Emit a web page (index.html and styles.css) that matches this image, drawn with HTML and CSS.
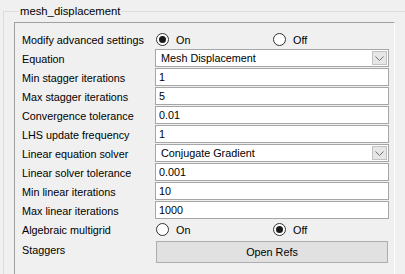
FILE: index.html
```html
<!DOCTYPE html>
<html>
<head>
<meta charset="utf-8">
<link rel="stylesheet" href="styles.css">
</head>
<body>
<fieldset class="group">
  <legend class="group-title">mesh_displacement</legend>
  <div class="panel">
    <div class="form">
      <div class="label">Modify advanced settings</div>
      <div class="radios">
        <label class="radio"><span class="dot on"></span>On</label>
        <label class="radio"><span class="dot"></span>Off</label>
      </div>

      <div class="label">Equation</div>
      <div class="combo"><span class="combo-text">Mesh Displacement</span><span class="combo-btn"><svg width="9" height="5" viewBox="0 0 9 5"><path d="M0.5 0.5 L4.5 4.5 L8.5 0.5" fill="none" stroke="#707070" stroke-width="1"/></svg></span></div>

      <div class="label">Min stagger iterations</div>
      <div class="textbox">1</div>

      <div class="label">Max stagger iterations</div>
      <div class="textbox">5</div>

      <div class="label">Convergence tolerance</div>
      <div class="textbox">0.01</div>

      <div class="label">LHS update frequency</div>
      <div class="textbox">1</div>

      <div class="label">Linear equation solver</div>
      <div class="combo"><span class="combo-text">Conjugate Gradient</span><span class="combo-btn"><svg width="9" height="5" viewBox="0 0 9 5"><path d="M0.5 0.5 L4.5 4.5 L8.5 0.5" fill="none" stroke="#707070" stroke-width="1"/></svg></span></div>

      <div class="label">Linear solver tolerance</div>
      <div class="textbox">0.001</div>

      <div class="label">Min linear iterations</div>
      <div class="textbox">10</div>

      <div class="label">Max linear iterations</div>
      <div class="textbox">1000</div>

      <div class="label">Algebraic multigrid</div>
      <div class="radios">
        <label class="radio"><span class="dot"></span>On</label>
        <label class="radio"><span class="dot on"></span>Off</label>
      </div>

      <div class="label label-btn">Staggers</div>
      <div class="button">Open Refs</div>
    </div>
  </div>
</fieldset>
</body>
</html>
```

FILE: styles.css
```css
html, body {
  margin: 0;
  padding: 0;
  background: #f0f0f0;
  overflow: hidden;
  width: 405px;
  height: 274px;
}
body {
  font-family: "Liberation Sans", Arial, sans-serif;
  font-size: 10.8px;
  color: #000;
}
.group {
  margin: 5px 0 0 3px;
  padding: 4px 0 0 10px;
  border: 1px solid #dcdcdc;
  border-right: none;
  border-bottom: none;
  width: 402px;
  height: 269px;
  box-sizing: border-box;
  overflow: hidden;
}
.group-title {
  padding: 0 1px;
  margin-left: 5px;
  line-height: 13px;
  font-size: 11.3px;
}
.panel {
  width: 381px;
  height: 260px;
  box-sizing: border-box;
  border-top: 1px solid #a0a0a0;
  border-left: 1px solid #a0a0a0;
  border-right: 1px solid #ffffff;
  padding: 7px 0 0 7px;
}
.form {
  display: grid;
  grid-template-columns: 133px 234px;
  grid-auto-rows: 19px;
  align-items: center;
}
.label {
  white-space: nowrap;
  align-self: center;
}
.textbox, .combo {
  height: 18px;
  box-sizing: border-box;
  background: #fff;
  border: 1px solid #a6a6a6;
  align-self: start;
  line-height: 16px;
}
.textbox {
  padding-left: 3px;
}
.combo {
  display: flex;
  justify-content: space-between;
  padding-left: 5px;
}
.combo-btn {
  width: 15px;
  height: 14px;
  margin: 1px 1px 0 0;
  box-sizing: border-box;
  background: #e6e6e6;
  border: 1px solid #c2c2c2;
  display: flex;
  align-items: center;
  justify-content: center;
}
.radios {
  display: grid;
  grid-template-columns: 1fr 1fr;
}
.radio {
  display: flex;
  align-items: center;
  gap: 7px;
  padding-left: 1px;
}
.dot {
  width: 13px;
  height: 13px;
  box-sizing: border-box;
  border-radius: 50%;
  border: 1px solid #333;
  background: #fff;
  display: flex;
  align-items: center;
  justify-content: center;
}
.dot.on::after {
  content: "";
  width: 7px;
  height: 7px;
  border-radius: 50%;
  background: #1a1a1a;
}
.label-btn {
  margin-top: 3px;
}
.button {
  margin: 2px 1px 0 1px;
  height: 22px;
  box-sizing: border-box;
  align-self: start;
  background: #e1e1e1;
  border: 1px solid #adadad;
  display: flex;
  align-items: center;
  justify-content: center;
}
```
